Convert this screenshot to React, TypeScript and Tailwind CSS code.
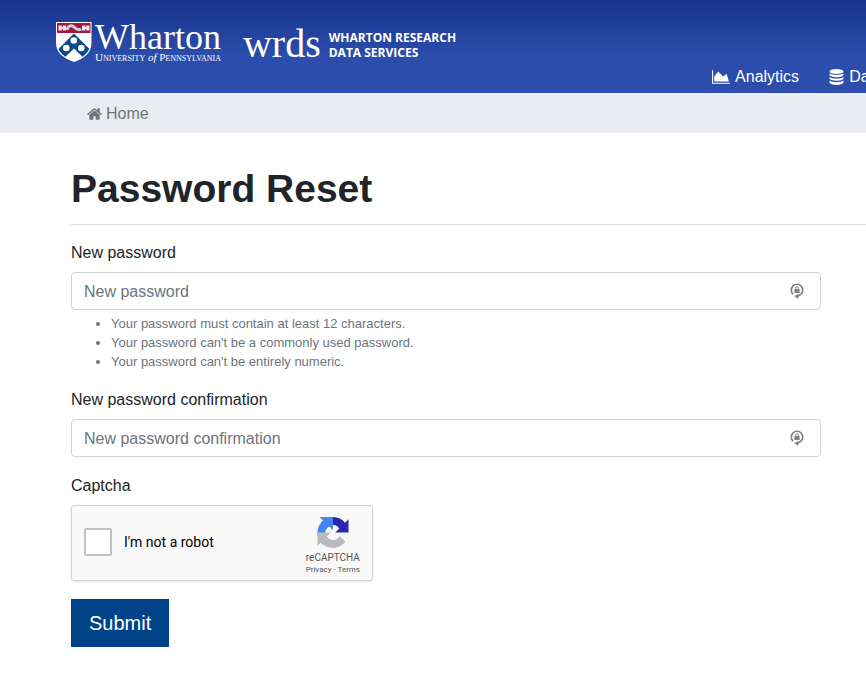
import { useState } from "react";

const passwordRules = [
  "Your password must contain at least 12 characters.",
  "Your password can't be a commonly used password.",
  "Your password can't be entirely numeric.",
];

const AreaChartIcon = () => (
  <svg viewBox="0 0 2048 1792" className="h-4 w-[18px]" fill="currentColor" aria-hidden="true">
    <path d="M2048 1536v128h-2048v-1536h128v1408h1920zM1664 512l256 896h-1664v-576l448-576 576 576z" />
  </svg>
);

const DatabaseIcon = () => (
  <svg viewBox="0 0 15 16" className="h-4 w-[15px]" fill="currentColor" aria-hidden="true">
    <ellipse cx="7.5" cy="2.5" rx="7" ry="2.4" />
    <path d="M.5 4.3C3 6.5 12 6.5 14.5 4.3V6C13.5 9 1.5 9 .5 6Z" />
    <path d="M.5 7.9C3 10.1 12 10.1 14.5 7.9V9.6C13.5 12.6 1.5 12.6 .5 9.6Z" />
    <path d="M.5 11.5C3 13.7 12 13.7 14.5 11.5V13.2C13.5 16.8 1.5 16.8 .5 13.2Z" />
  </svg>
);

const HomeIcon = () => (
  <svg viewBox="64 128 1664 1536" className="h-[14px] w-[15px]" fill="currentColor" aria-hidden="true">
    <path d="M1472 992v480q0 26-19 45t-45 19h-384v-384h-256v384h-384q-26 0-45-19t-19-45v-480q0-1 .5-3t.5-3l575-474 575 474q1 2 1 6zm223-69l-62 74q-8 9-21 11h-3q-13 0-21-7l-692-577-692 577q-12 8-24 7-13-2-21-11l-62-74q-8-10-7-23.5t11-21.5l719-599q32-26 76-26t76 26l244 204v-195q0-14 9-23t23-9h192q14 0 23 9t9 23v408l219 182q10 8 11 21.5t-7 23.5z" />
  </svg>
);

const PennShield = () => (
  <svg viewBox="0 0 36 42" className="h-[42px] w-9 shrink-0" aria-hidden="true">
    <defs>
      <clipPath id="shield">
        <path d="M1 2H34.5V22C34.5 31 27 36.5 18 40C9 36.5 1 31 1 22Z" />
      </clipPath>
    </defs>
    <path d="M0 1H35.5V22C35.5 32 28 37.5 18 41C8 37.5 0 32 0 22Z" fill="#fff" />
    <g clipPath="url(#shield)">
      <path d="M1 1H35V12H1Z" fill="#a3173f" />
      <path d="M2.5 4.5H10V9.5H2.5ZM26 4.5H33.5V9.5H26Z" fill="#f4e4ea" />
      <path d="M6.3 4V6M6.3 8V10M29.7 4V6M29.7 8V10" stroke="#a3173f" strokeWidth="1" />
      <path d="M11 9C12 4 16 4 18 6S22 10 25 8" fill="none" stroke="#c9d3e6" strokeWidth="3" />
      <path d="M18 12.5L36 30.5V45L18 27.5L0 45V30.5Z" fill="#0b4a86" />
      <circle cx="17.8" cy="19.5" r="3.3" fill="#fff" />
      <circle cx="10.3" cy="27" r="3.3" fill="#fff" />
      <circle cx="25.3" cy="27" r="3.3" fill="#fff" />
    </g>
  </svg>
);

const RecaptchaLogo = () => (
  <svg viewBox="-1 0 66 66" className="h-8 w-8" aria-hidden="true">
    <path
      d="M64 31.955l-.033-1.37V4.687l-7.16 7.16C50.948 4.674 42.033.093 32.05.093c-10.4 0-19.622 4.96-25.458 12.64l11.736 11.86a15.55 15.55 0 0 1 4.754-5.334c2.05-1.6 4.952-2.906 8.968-2.906.485 0 .86.057 1.135.163 4.976.393 9.288 3.14 11.828 7.124l-8.307 8.307L64 31.953"
      fill="#2727b0"
    />
    <path
      d="M31.862.094l-1.37.033H4.594l7.16 7.16C4.58 13.147 0 22.06 0 32.046c0 10.4 4.96 19.622 12.64 25.458L24.5 45.768a15.55 15.55 0 0 1-5.334-4.754c-1.6-2.05-2.906-4.952-2.906-8.968 0-.485.057-.86.163-1.135.393-4.976 3.14-9.288 7.124-11.828l8.307 8.307L31.86.095"
      fill="#4285f4"
    />
    <path
      d="M.001 32.045l.033 1.37v25.898l7.16-7.16c5.86 7.173 14.774 11.754 24.76 11.754 10.4 0 19.622-4.96 25.458-12.64l-11.736-11.86a15.55 15.55 0 0 1-4.754 5.334c-2.05 1.6-4.952 2.906-8.968 2.906-.485 0-.86-.057-1.135-.163-4.976-.393-9.288-3.14-11.828-7.124l8.307-8.307L0 32.045"
      fill="#bababa"
    />
  </svg>
);

const PasswordManagerIcon = () => (
  <svg viewBox="0 0 14 18" className="h-[18px] w-[14px]" fill="none" aria-hidden="true">
    <path d="M3.2 12.2A5.7 5.7 0 1 1 10.8 12.2L8 14.3" stroke="#808080" strokeWidth="1.7" />
    <path d="M4.4 14.3L8.2 11.8V17Z" fill="#808080" />
    <path d="M5.7 7.5V6A1.3 1.3 0 0 1 8.3 6V7.5" stroke="#808080" strokeWidth=".9" />
    <path d="M4.4 7H9.6V11H4.4Z" fill="#808080" />
  </svg>
);

interface PasswordFieldProps {
  id: string;
  label: string;
  value: string;
  onChange: (value: string) => void;
}

const PasswordField = ({ id, label, value, onChange }: PasswordFieldProps) => (
  <div>
    <label htmlFor={id} className="mb-[7px] block">
      {label}
    </label>
    <div className="flex h-[38px] items-center rounded border border-[#ced4da] bg-white pr-4 pl-3">
      <input
        id={id}
        type="password"
        placeholder={label}
        value={value}
        onChange={(e) => onChange(e.target.value)}
        className="min-w-0 flex-1 bg-transparent pt-0.5 outline-none placeholder:text-[#6c757d]"
      />
      <PasswordManagerIcon />
    </div>
  </div>
);

const Header = () => (
  <header className="flex h-[93px] overflow-hidden bg-linear-to-b from-[#18338c] to-[#2c4dab] to-60% pl-14 text-white">
    <a href="#" className="flex shrink-0 items-start pt-[21px]">
      <PennShield />
      <span className="ml-[3px] flex flex-col font-['Liberation_Serif',serif]">
        <span className="text-[36px] leading-8">Wharton</span>
        <span className="text-[11px] leading-2 whitespace-nowrap">
          U<span className="text-[8px]">NIVERSITY</span> <i>of</i> P
          <span className="text-[8px]">ENNSYLVANIA</span>
        </span>
      </span>
    </a>
    <a href="#" className="ml-[22px] flex shrink-0 items-start pt-6">
      <span className="font-['Liberation_Serif',serif] text-[40px] leading-10">wrds</span>
      <span className="ml-2 pt-1.5 font-['Open_Sans',sans-serif] text-[12px] leading-[15px] font-bold whitespace-nowrap">
        WHARTON RESEARCH
        <br />
        DATA SERVICES
      </span>
    </a>
    <nav className="ml-64 flex shrink-0 items-end gap-[30px] pb-1">
      <a href="#" className="flex items-center gap-[5px]">
        <AreaChartIcon />
        Analytics
      </a>
      <a href="#" className="flex items-center gap-[5px]">
        <DatabaseIcon />
        Data
      </a>
    </nav>
  </header>
);

export default function App() {
  const [password, setPassword] = useState("");
  const [confirmPassword, setConfirmPassword] = useState("");

  return (
    <div className="overflow-hidden bg-white font-['Liberation_Sans',Arial,sans-serif] text-base text-[#212529]">
      <Header />
      <nav className="flex h-10 items-center bg-[#e9ecf0] pt-px pl-[87px] text-[#6c757d]">
        <a href="#" className="flex items-center gap-1">
          <HomeIcon />
          Home
        </a>
      </nav>

      <main className="pt-8 pl-[71px]">
        <h1 className="border-b border-[#d9dadb] pb-[11px] text-[39px] leading-12 font-bold">
          Password Reset
        </h1>
        <form className="mr-[45px] pt-4 pb-8" onSubmit={(e) => e.preventDefault()}>
          <PasswordField id="password" label="New password" value={password} onChange={setPassword} />
          <ul className="mt-1 mb-[17px] list-disc pl-10 text-[13px] leading-[19px] text-[#6c757d]">
            {passwordRules.map((rule) => (
              <li key={rule}>{rule}</li>
            ))}
          </ul>
          <PasswordField
            id="confirm-password"
            label="New password confirmation"
            value={confirmPassword}
            onChange={setConfirmPassword}
          />

          <h2 className="mt-[17px] mb-[7px]">Captcha</h2>
          <div className="flex h-19 w-[302px] items-center rounded-[3px] border border-[#d3d3d3] bg-[#f9f9f9] px-3 pb-0.5 font-[Roboto,sans-serif] shadow-sm">
            <input
              id="robot"
              type="checkbox"
              className="h-7 w-7 appearance-none rounded-[2px] border-2 border-[#c1c1c1] bg-white"
            />
            <label htmlFor="robot" className="ml-3 text-[14px] text-black">
              I'm not a robot
            </label>
            <div className="ml-auto flex flex-col items-center pt-2 text-[#555]">
              <RecaptchaLogo />
              <span className="mt-[3px] text-[10px] leading-3">reCAPTCHA</span>
              <span className="text-[8px] leading-3">
                <a href="#">Privacy</a> - <a href="#">Terms</a>
              </span>
            </div>
          </div>

          <button
            type="submit"
            className="mt-[18px] h-12 border border-[#004388] bg-[#004388] px-[17px] text-[20px] text-white"
          >
            Submit
          </button>
        </form>
      </main>
    </div>
  );
}
